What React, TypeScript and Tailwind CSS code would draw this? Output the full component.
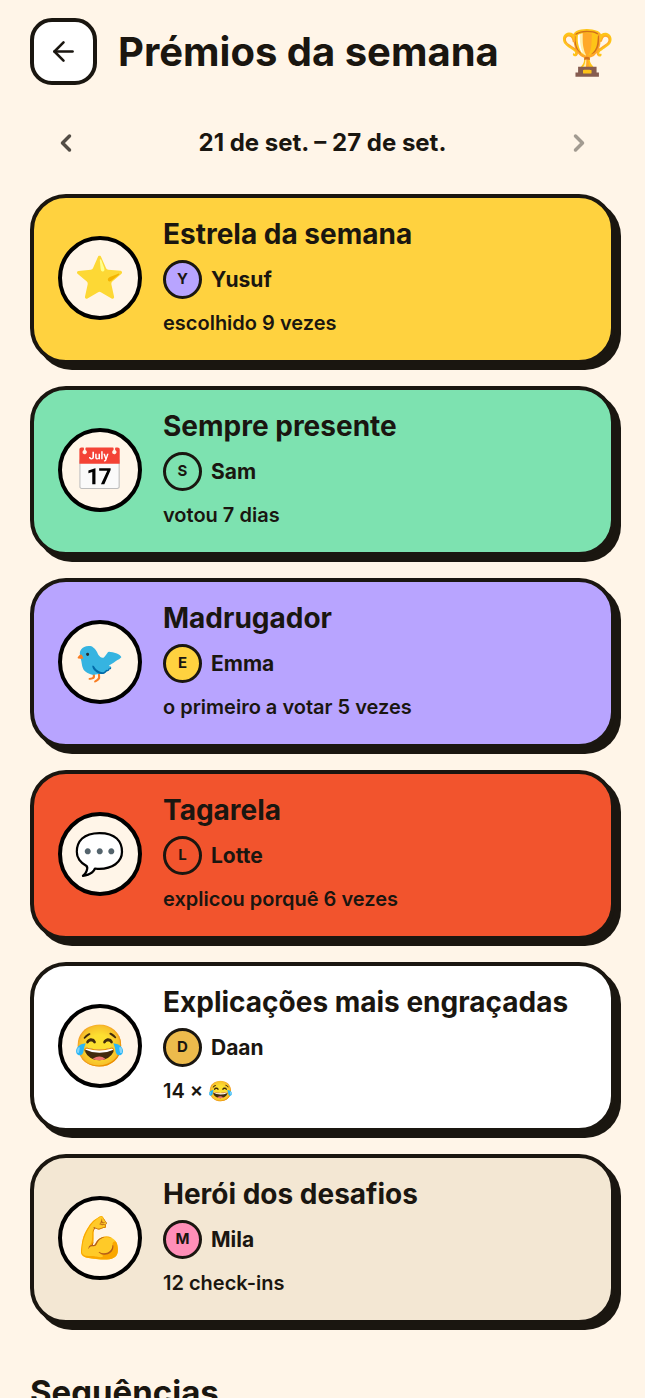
import { ArrowLeft, ChevronLeft, ChevronRight } from "lucide-react";

type Award = {
  title: string;
  emoji: string;
  name: string;
  detail: string;
  card: string;
  avatar: string;
};

const awards: Award[] = [
  { title: "Estrela da semana", emoji: "⭐", name: "Yusuf", detail: "escolhido 9 vezes", card: "bg-[#ffd23f]", avatar: "bg-[#b8a4ff]" },
  { title: "Sempre presente", emoji: "📅", name: "Sam", detail: "votou 7 dias", card: "bg-[#7de2b0]", avatar: "bg-[#7de2b0]" },
  { title: "Madrugador", emoji: "🐦", name: "Emma", detail: "o primeiro a votar 5 vezes", card: "bg-[#b8a4ff]", avatar: "bg-[#ffd23f]" },
  { title: "Tagarela", emoji: "💬", name: "Lotte", detail: "explicou porquê 6 vezes", card: "bg-[#f2542d]", avatar: "bg-[#f2542d]" },
  { title: "Explicações mais engraçadas", emoji: "😂", name: "Daan", detail: "14 × 😂", card: "bg-white", avatar: "bg-[#edbb4c]" },
  { title: "Herói dos desafios", emoji: "💪", name: "Mila", detail: "12 check-ins", card: "bg-[#f3e7d3]", avatar: "bg-[#ff8fb8]" },
];

function AwardCard({ award }: { award: Award }) {
  return (
    <li className={`flex items-center gap-[21px] rounded-[36px] border-4 border-[#1a1610] px-6 pt-[19px] pb-[22px] shadow-[6px_6px_0_#1a1610] ${award.card}`}>
      <span className="flex size-[84px] shrink-0 items-center justify-center rounded-full border-4 border-black bg-[#fff5e8] text-[41px] leading-none">
        {award.emoji}
      </span>
      <div className="min-w-0">
        <h2 className="text-[28px] leading-[34px] font-bold">{award.title}</h2>
        <div className="mt-[9px] flex items-center gap-[9px]">
          <span className={`flex size-[39px] shrink-0 items-center justify-center rounded-full border-3 border-[#1a1610] text-[15px] font-bold ${award.avatar}`}>
            {award.name[0]}
          </span>
          <span className="text-[21px] leading-[30px] font-bold">{award.name}</span>
        </div>
        <p className="mt-[9px] text-xl leading-[30px] font-semibold">{award.detail}</p>
      </div>
    </li>
  );
}

export default function App() {
  return (
    <main className="min-h-screen bg-[#fff5e8] px-[30px] pt-[18px] font-['Inter','Noto_Color_Emoji',sans-serif] text-[#1a1610]">
      <header className="flex items-center gap-[21px]">
        <button type="button" aria-label="Voltar" className="flex size-[67px] shrink-0 items-center justify-center rounded-[22px] border-4 border-[#1a1610] bg-white">
          <ArrowLeft size={31} strokeWidth={2} />
        </button>
        <h1 className="grow text-[40px] leading-[48px] font-bold whitespace-nowrap">Prémios da semana</h1>
        <span className="text-[44px] leading-none">🏆</span>
      </header>
      <nav aria-label="Semana" className="mt-[22px] flex items-center justify-between">
        <button type="button" aria-label="Semana anterior" className="flex size-[72px] items-center justify-center opacity-75">
          <ChevronLeft size={28} strokeWidth={3} />
        </button>
        <p className="text-2xl leading-8 font-bold">21 de set. – 27 de set.</p>
        <button type="button" aria-label="Semana seguinte" disabled className="flex size-[72px] items-center justify-center opacity-40">
          <ChevronRight size={28} strokeWidth={3} />
        </button>
      </nav>
      <ul className="mt-[15px] flex flex-col gap-[22px]">
        {awards.map((award) => (
          <AwardCard key={award.title} award={award} />
        ))}
      </ul>
      <h2 className="mt-12 text-[33px] leading-10 font-bold">Sequências</h2>
    </main>
  );
}
